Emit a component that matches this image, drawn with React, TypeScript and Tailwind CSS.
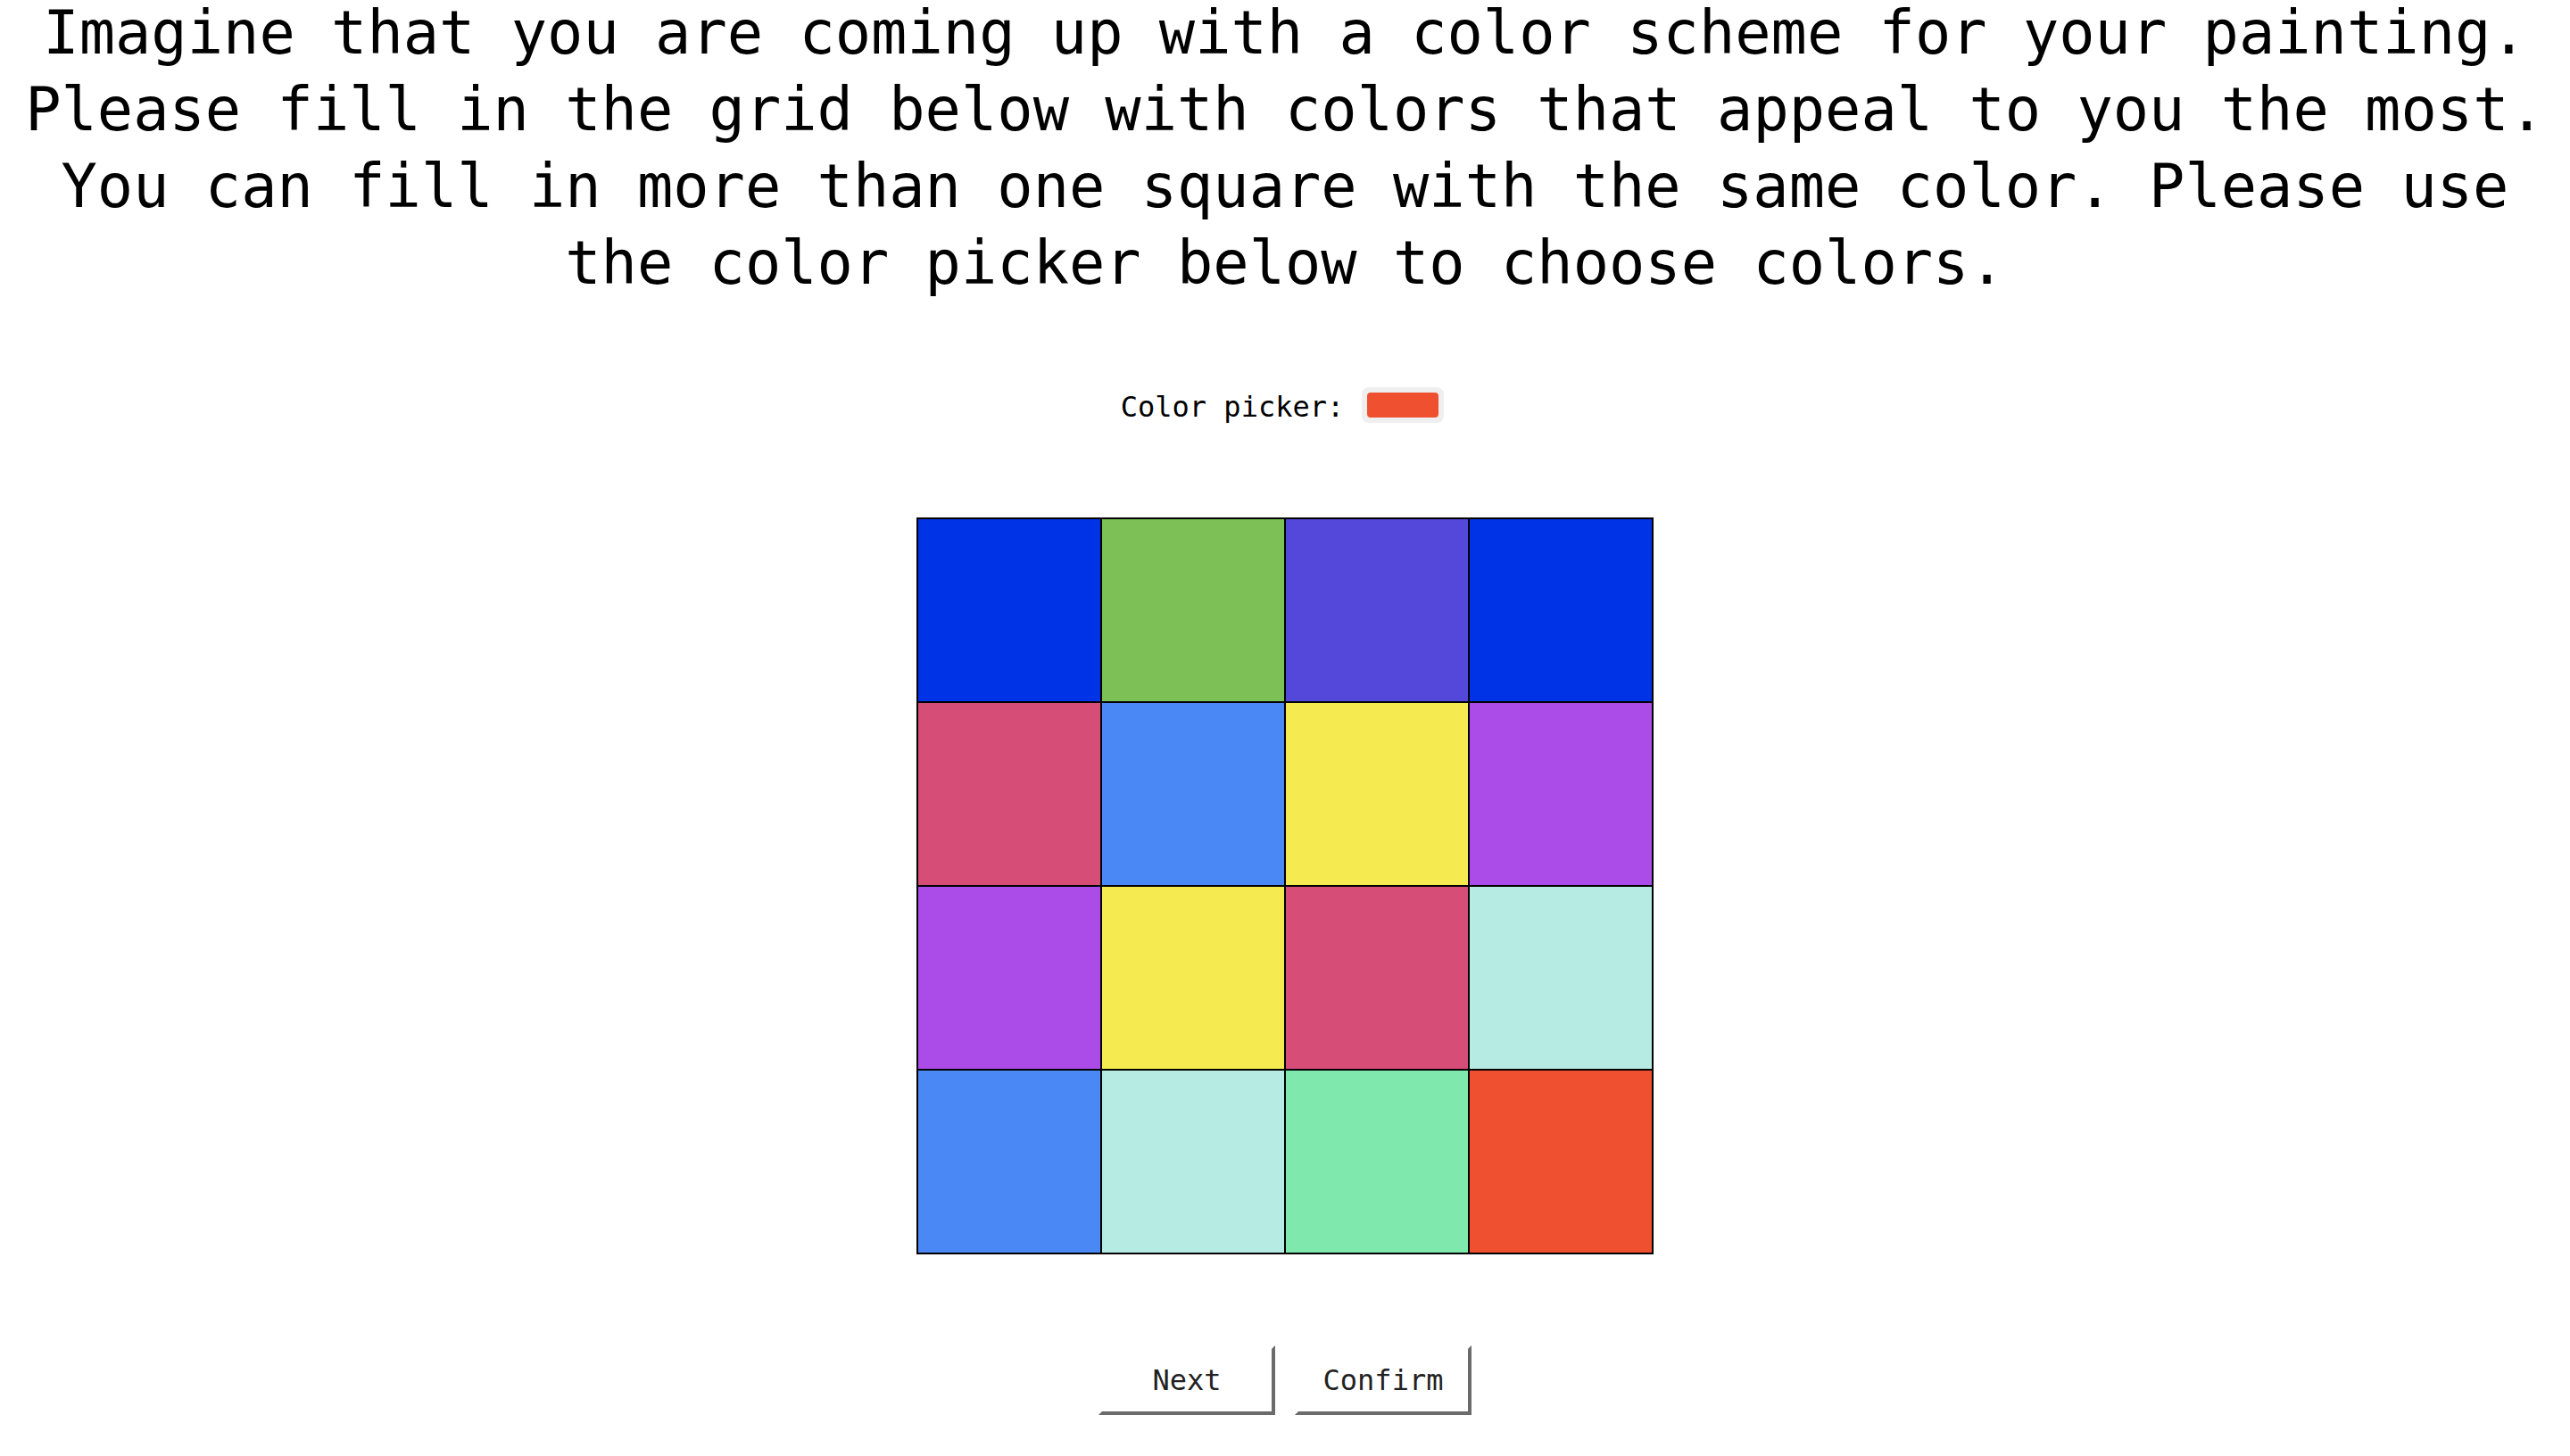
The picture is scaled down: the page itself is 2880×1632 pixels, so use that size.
import React from 'react';

const cells: string[] = [
  'bg-[#0033e6]', 'bg-[#7dc055]', 'bg-[#5448da]', 'bg-[#0033e6]',
  'bg-[#d64d78]', 'bg-[#4a88f5]', 'bg-[#f5ea4f]', 'bg-[#ab4ce9]',
  'bg-[#ab4ce9]', 'bg-[#f5ea4f]', 'bg-[#d64d78]', 'bg-[#b5ebe3]',
  'bg-[#4a88f5]', 'bg-[#b5ebe3]', 'bg-[#7ee8ad]', 'bg-[#ef5130]',
];

const Button: React.FC<{ label: string }> = ({ label }) => (
  <button className="w-[198px] h-[78px] bg-white border-4 border-t-white border-l-white border-r-[#6b6b6b] border-b-[#6b6b6b] text-[32px] text-[#222222] leading-none">
    {label}
  </button>
);

export default function App() {
  return (
    <div className="min-h-screen bg-white text-black font-['DejaVu_Sans_Mono',monospace] flex flex-col items-center">
      <h1 className="w-full text-center text-[67px] leading-[86px] font-normal -mt-[6px]">
        Imagine that you are coming up with a color scheme for your painting.
        <br />
        Please fill in the grid below with colors that appeal to you the most.
        <br />
        You can fill in more than one square with the same color. Please use
        <br />
        the color picker below to choose colors.
      </h1>

      <div className="mt-[96px] flex items-start gap-[20px] pr-[6px]">
        <span className="text-[32px] mt-[4px] leading-[37px]">Color picker:</span>
        <div className="w-[92px] h-[40px] p-[6px] rounded-[8px] bg-[#efefef]">
          <div className="w-full h-full rounded-[4px] bg-[#ef5130]" />
        </div>
      </div>

      <div className="mt-[105px] grid grid-cols-4 border border-black">
        {cells.map((c, i) => (
          <div key={i} className={`w-[206px] h-[206px] border border-black ${c}`} />
        ))}
      </div>

      <div className="mt-[102px] flex gap-[22px]">
        <Button label="Next" />
        <Button label="Confirm" />
      </div>
    </div>
  );
}
